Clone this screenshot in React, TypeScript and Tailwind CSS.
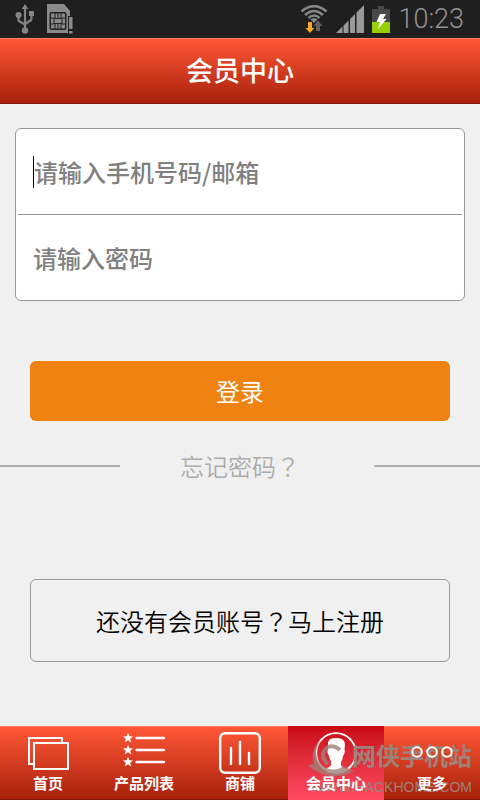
import type { ReactNode } from 'react';
import clsx from 'clsx';

const STAR = 'M0-5.2 1.4-1.7 5.1-1.6 2.2.7 3.2 4.4 0 2.3-3.2 4.4-2.2.7-5.1-1.6-1.4-1.7Z';

function UsbIcon() {
  return (
    <svg width="20" height="30" viewBox="0 0 20 30" fill="#858585" aria-hidden="true">
      <path d="M10 0 13.3 5H6.7Z" />
      <path d="M10 4v22M3.5 12v3.5q0 1.7 1.5 2.3l5 2.7M16.5 10v4.5q0 1.7-1.5 2.3l-5 3.2" fill="none" stroke="#858585" strokeWidth="2.2" />
      <circle cx="3.5" cy="11" r="3" />
      <rect x="14" y="7" width="5" height="5" />
      <circle cx="10" cy="26.5" r="3.2" />
    </svg>
  );
}

function SimIcon() {
  return (
    <svg width="26" height="30" viewBox="0 0 26 30" fill="#8a8a8a" aria-hidden="true">
      <path d="M0 0h17l6 7v5h-2v17H0Z" />
      <rect x="2.5" y="8" width="17" height="18" rx="2" fill="#222" />
      <rect x="4" y="9.5" width="14" height="15" rx="1" />
      <path d="M8 9v5M11 9v5M14 9v5M8 20v5M11 20v5M14 20v5M4 14h3M15 14h3M4 20h3M15 20h3" stroke="#222" />
      <rect x="7" y="14.5" width="8" height="5" fill="none" stroke="#222" />
      <path d="M22 13h3.5v12H22ZM22 27h3.5v2.5H22Z" />
    </svg>
  );
}

function WifiIcon() {
  return (
    <svg width="28" height="28" viewBox="0 0 28 28" fill="none" aria-hidden="true">
      <g stroke="#858585" strokeWidth="2.6">
        <path d="M1.5 6.5Q14-4 26.5 6.5" />
        <path d="M5 10Q14 2 23 10" />
        <path d="M8.5 13Q14 8 19.5 13" />
      </g>
      <path d="M10.5 14.5Q14 11.5 17.5 14.5L14 18Z" fill="#858585" />
      <path d="M8 17h4v6h2.5L10 28 5.5 23H8Z" fill="#f8a52c" />
      <path d="M16 26v-5h-2.5L18 15.5l4.5 5.5H20v5Z" fill="#606060" />
    </svg>
  );
}

function SignalIcon() {
  return (
    <svg width="28" height="28" viewBox="0 0 28 28" fill="#999" aria-hidden="true">
      <path d="M0 28 6.5 21.5V28ZM7.5 20.5l5-5V28h-5ZM14 14l5-5V28h-5ZM20.5 7.5l7.5-7.5v28h-7.5Z" />
    </svg>
  );
}

function BatteryIcon() {
  return (
    <svg width="18" height="27" viewBox="0 0 18 27" aria-hidden="true">
      <path d="M6 0h6v3h6v13H0V3h6Z" fill="#484848" />
      <path d="M0 16h18v11H0Z" fill="#98cf00" />
      <path d="M8 8h6l-3 5h3.5L6 23l2-7H4.5Z" fill="#fff" />
    </svg>
  );
}

function HomeIcon() {
  return (
    <svg width="44" height="44" viewBox="0 0 44 44" fill="none" stroke="#fff" strokeWidth="2" aria-hidden="true">
      <path d="M36 11V7H3v26h5" />
      <rect x="8" y="12" width="34" height="26" />
    </svg>
  );
}

function ListIcon() {
  return (
    <svg width="44" height="44" viewBox="0 0 44 44" fill="#fff" aria-hidden="true">
      {[7, 19, 31].map((y) => (
        <g key={y} transform={`translate(6 ${y})`}>
          <path d={STAR} />
          <path d="M8.5 0H36" stroke="#fff" strokeWidth="2.4" strokeLinecap="round" />
        </g>
      ))}
    </svg>
  );
}

function ShopIcon() {
  return (
    <svg width="44" height="44" viewBox="0 0 44 44" fill="none" stroke="#fff" strokeWidth="2.4" strokeLinecap="round" aria-hidden="true">
      <rect x="2.2" y="2.2" width="39.6" height="39.6" rx="5" />
      <path d="M13 17v16M22 11v22M31 22v11" />
    </svg>
  );
}

function MemberIcon() {
  return (
    <svg width="44" height="44" viewBox="0 0 44 44" aria-hidden="true">
      <circle cx="22" cy="22" r="19.8" fill="none" stroke="#fff" strokeWidth="1.8" />
      <path d="M14.500 10q1.500-3 7.500-3t8 3q1.500 2 .5 8 1 4-1.500 7-.5 4-2 6v3q1 3 7 5Q23 45 10 38q6-1.500 7-4v-4q-1.500-2-2-5-2.500-3-1-7-.5-5 .5-8Z" fill="#fff" />
    </svg>
  );
}

function MoreIcon() {
  return (
    <svg className="relative z-10" width="44" height="44" viewBox="0 0 44 44" fill="none" stroke="#fff" strokeWidth="2" aria-hidden="true">
      <circle cx="7" cy="21" r="4.8" />
      <circle cx="22" cy="21" r="4.8" />
      <circle cx="37" cy="21" r="4.8" />
    </svg>
  );
}

const tabs: { label: string; icon: ReactNode; active?: boolean }[] = [
  { label: '首页', icon: <HomeIcon /> },
  { label: '产品列表', icon: <ListIcon /> },
  { label: '商铺', icon: <ShopIcon /> },
  { label: '会员中心', icon: <MemberIcon />, active: true },
  { label: '更多', icon: <MoreIcon /> },
];

function StatusBar() {
  return (
    <div className="flex h-[38px] items-center justify-between bg-[#1f1f1f] pr-4 pl-[15px]">
      <div className="flex items-center gap-3">
        <UsbIcon />
        <SimIcon />
      </div>
      <div className="flex items-center gap-2">
        <WifiIcon />
        <SignalIcon />
        <BatteryIcon />
        <span className="font-['Roboto',sans-serif] text-[27px] leading-8 font-light text-[#929292]">10:23</span>
      </div>
    </div>
  );
}

// 半透明水印，盖在底部导航上，文字标签仍在最上层
function Watermark() {
  return (
    <div className="pointer-events-none absolute right-2 bottom-0 flex flex-col items-end text-[#a08078]">
      <svg className="absolute top-1 right-[116px] opacity-80" width="48" height="38" viewBox="0 0 48 38" aria-hidden="true">
        <path d="M16 0C4 8 6 25 21 30q9 2 14-3l11 5Q36 38 24 37 8 35 0 26l6-1Q1 8 16 0Z" fill="currentColor" />
        <path d="M32 11q-10-8-16 1-3 7 4 13" fill="none" stroke="currentColor" strokeWidth="4" />
      </svg>
      <span className="text-2xl leading-10 font-bold">网侠手机站</span>
      <span className="font-['Liberation_Sans',sans-serif] text-sm leading-6">WWW.HACKHOME.COM</span>
    </div>
  );
}

export default function App() {
  return (
    <div className="flex min-h-screen flex-col bg-[#f0f0f0] font-['Noto_Sans_CJK_SC',sans-serif]">
      <StatusBar />

      <header className="flex h-[66px] items-center justify-center border-t border-b border-t-[#ff8062] border-b-[#7c1705] bg-linear-to-b from-[#ff5735] to-[#a8200a] pb-0.5">
        <h1 className="text-[27px] leading-10 font-medium text-white">会员中心</h1>
      </header>

      <main className="flex flex-1 flex-col pt-6">
        <form onSubmit={(e) => e.preventDefault()}>
          <div className="mx-[15px] rounded-md border border-[#999] bg-white px-0.5">
            <div className="flex h-[86px] items-center border-b border-[#999] pl-[15px]">
              <span className="h-8 w-px bg-black" />
              <input
                type="text"
                aria-label="手机号码/邮箱"
                placeholder="请输入手机号码/邮箱"
                className="min-w-0 flex-1 text-2xl font-medium outline-none placeholder:text-[#808080]"
              />
            </div>
            <div className="flex h-[85px] items-center pl-[15px]">
              <input
                type="password"
                aria-label="密码"
                placeholder="请输入密码"
                className="min-w-0 flex-1 text-2xl font-medium outline-none placeholder:text-[#808080]"
              />
            </div>
          </div>

          <div className="mt-[60px] px-[30px]">
            <button type="submit" className="h-[60px] w-full rounded-md bg-[#f08211] text-2xl text-white">
              登录
            </button>
          </div>
        </form>

        <div className="mt-[27px] flex items-center">
          <span className="h-0.5 w-1/4 bg-[#b0b0b0]" />
          <a href="#forgot" className="flex-1 pl-[60px] text-2xl leading-9 font-[350] text-[#acacac]">
            忘记密码<span className="font-['Noto_Sans_CJK_TC',sans-serif]">？</span>
          </a>
          <span className="h-0.5 w-[22%] bg-[#b0b0b0]" />
        </div>

        <a
          href="#register"
          className="mx-[30px] mt-[95px] mb-16 flex h-[83px] items-center justify-center rounded-md border border-[#999] text-2xl font-[350] text-black"
        >
          还没有会员账号<span className="font-['Noto_Sans_CJK_TC',sans-serif]">？</span>马上注册
        </a>
      </main>

      <nav className="relative grid h-[74px] grid-cols-5 border-t border-b border-t-[#ff8062] border-b-[#7c1705] bg-linear-to-b from-[#ff5735] to-[#a8200a]">
        {tabs.map((tab) => (
          <a
            key={tab.label}
            href="#tab"
            className={clsx(
              'flex flex-col items-center pt-1 text-[15px] leading-4 font-bold text-white',
              tab.active && '-my-px bg-linear-to-b from-[#c90512] to-[#ff4962] pt-[5px]',
            )}
          >
            {tab.icon}
            <span className="relative z-10">{tab.label}</span>
          </a>
        ))}
        <Watermark />
      </nav>
    </div>
  );
}
